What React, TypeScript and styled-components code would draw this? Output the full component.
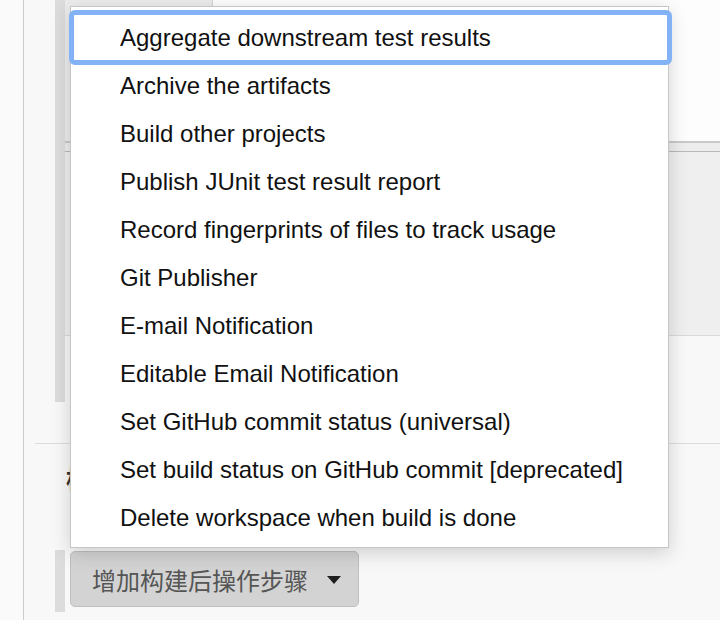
import React from 'react';
import styled, { createGlobalStyle } from 'styled-components';

const Global = createGlobalStyle`
  html, body { margin: 0; padding: 0; background: #fafafa; }
  body { font-family: "Liberation Sans", Arial, Helvetica, sans-serif; }
  #root { width: 720px; height: 620px; overflow: hidden; }
`;

const Page = styled.div`
  position: relative;
  display: flex;
  width: 720px;
  height: 620px;
  overflow: hidden;
  background: #fafafa;
`;

const Gutter = styled.div`
  width: 23px;
  flex: none;
  background: #fafafa;
`;

const Main = styled.div`
  flex: 1;
  display: flex;
  flex-direction: column;
  border-left: 1px solid #cdcdcd;
  background: #f8f8f8;
`;

const Chunk = styled.div<{ $height: number; $top?: number }>`
  display: flex;
  margin-left: 31px;
  margin-top: ${p => p.$top ?? 0}px;
  height: ${p => p.$height}px;
  flex: none;
`;

const ChunkBar = styled.div`
  width: 10px;
  flex: none;
  background: #dcdcdc;
`;

const ChunkBody = styled.div`
  flex: 1;
  display: flex;
  flex-direction: column;
`;

const TopRow = styled.div`
  display: flex;
  height: 141px;
`;

const LabelCell = styled.div`
  width: 147px;
  background: #ececec;
  border-right: 1px solid #d2d2d2;
`;

const ValueCell = styled.div`
  flex: 1;
  background: #fdfdfd;
`;

const RowHeader = styled.div`
  height: 8px;
  border-top: 2px solid #c9c9c9;
  border-bottom: 1px solid #b9b9b9;
  background: #ededed;
`;

const Panel = styled.div`
  height: 183px;
  background: #efefef;
  border-bottom: 1px solid #dadada;
`;

const Section = styled.div`
  margin-top: 41px;
  margin-left: 11px;
  border-top: 1px solid #dcdcdc;
  flex: none;
`;

const SectionTitle = styled.div`
  margin-top: 18px;
  padding-left: 31px;
  height: 32px;
  line-height: 32px;
  font-family: "Noto Sans CJK SC", "Liberation Sans", sans-serif;
  font-size: 24px;
  font-weight: 700;
  color: #333;
`;

const ButtonCell = styled.div`
  padding: 1px 0 0 5px;
`;

const AddButton = styled.button`
  display: flex;
  align-items: center;
  gap: 19px;
  width: 289px;
  height: 56px;
  box-sizing: border-box;
  padding: 0 0 0 21px;
  border: 1px solid #bfbfbf;
  border-radius: 5px;
  background: #d3d3d3;
  font-family: "Noto Sans CJK SC", "Liberation Sans", sans-serif;
  font-size: 24px;
  color: #555;
  cursor: pointer;
`;

const Caret = styled.span`
  width: 0;
  height: 0;
  border-left: 7px solid transparent;
  border-right: 7px solid transparent;
  border-top: 8px solid #1e1e1e;
  margin-top: 2px;
`;

const Menu = styled.ul`
  position: absolute;
  left: 70px;
  top: 6px;
  width: 599px;
  box-sizing: border-box;
  margin: 0;
  padding: 7px 0 5px;
  list-style: none;
  background: #fff;
  border: 1px solid #c6c6c6;
  box-shadow: 0 5px 18px rgba(0, 0, 0, 0.17);
  z-index: 10;
`;

const MenuItem = styled.li<{ $focused?: boolean }>`
  position: relative;
  height: 48px;
  line-height: 48px;
  padding-left: 49px;
  font-size: 24px;
  color: #111;
  white-space: nowrap;

  &::after {
    content: '';
    display: ${p => (p.$focused ? 'block' : 'none')};
    position: absolute;
    top: -4px;
    bottom: -3px;
    left: -2px;
    right: -4px;
    border: 5px solid #84b2f6;
    border-radius: 6px;
    pointer-events: none;
  }
`;

const items = [
  'Aggregate downstream test results',
  'Archive the artifacts',
  'Build other projects',
  'Publish JUnit test result report',
  'Record fingerprints of files to track usage',
  'Git Publisher',
  'E-mail Notification',
  'Editable Email Notification',
  'Set GitHub commit status (universal)',
  'Set build status on GitHub commit [deprecated]',
  'Delete workspace when build is done',
];

export default function App() {
  return (
    <>
      <Global />
      <Page>
        <Gutter />
        <Main>
          <Chunk $height={402}>
            <ChunkBar />
            <ChunkBody>
              <TopRow>
                <LabelCell />
                <ValueCell />
              </TopRow>
              <RowHeader />
              <Panel />
            </ChunkBody>
          </Chunk>
          <Section>
            <SectionTitle>构建后操作</SectionTitle>
          </Section>
          <Chunk $height={62} $top={56}>
            <ChunkBar />
            <ButtonCell>
              <AddButton type="button">
                增加构建后操作步骤
                <Caret />
              </AddButton>
            </ButtonCell>
          </Chunk>
        </Main>
        <Menu>
          {items.map((t, i) => (
            <MenuItem key={t} $focused={i === 0}>
              {t}
            </MenuItem>
          ))}
        </Menu>
      </Page>
    </>
  );
}
